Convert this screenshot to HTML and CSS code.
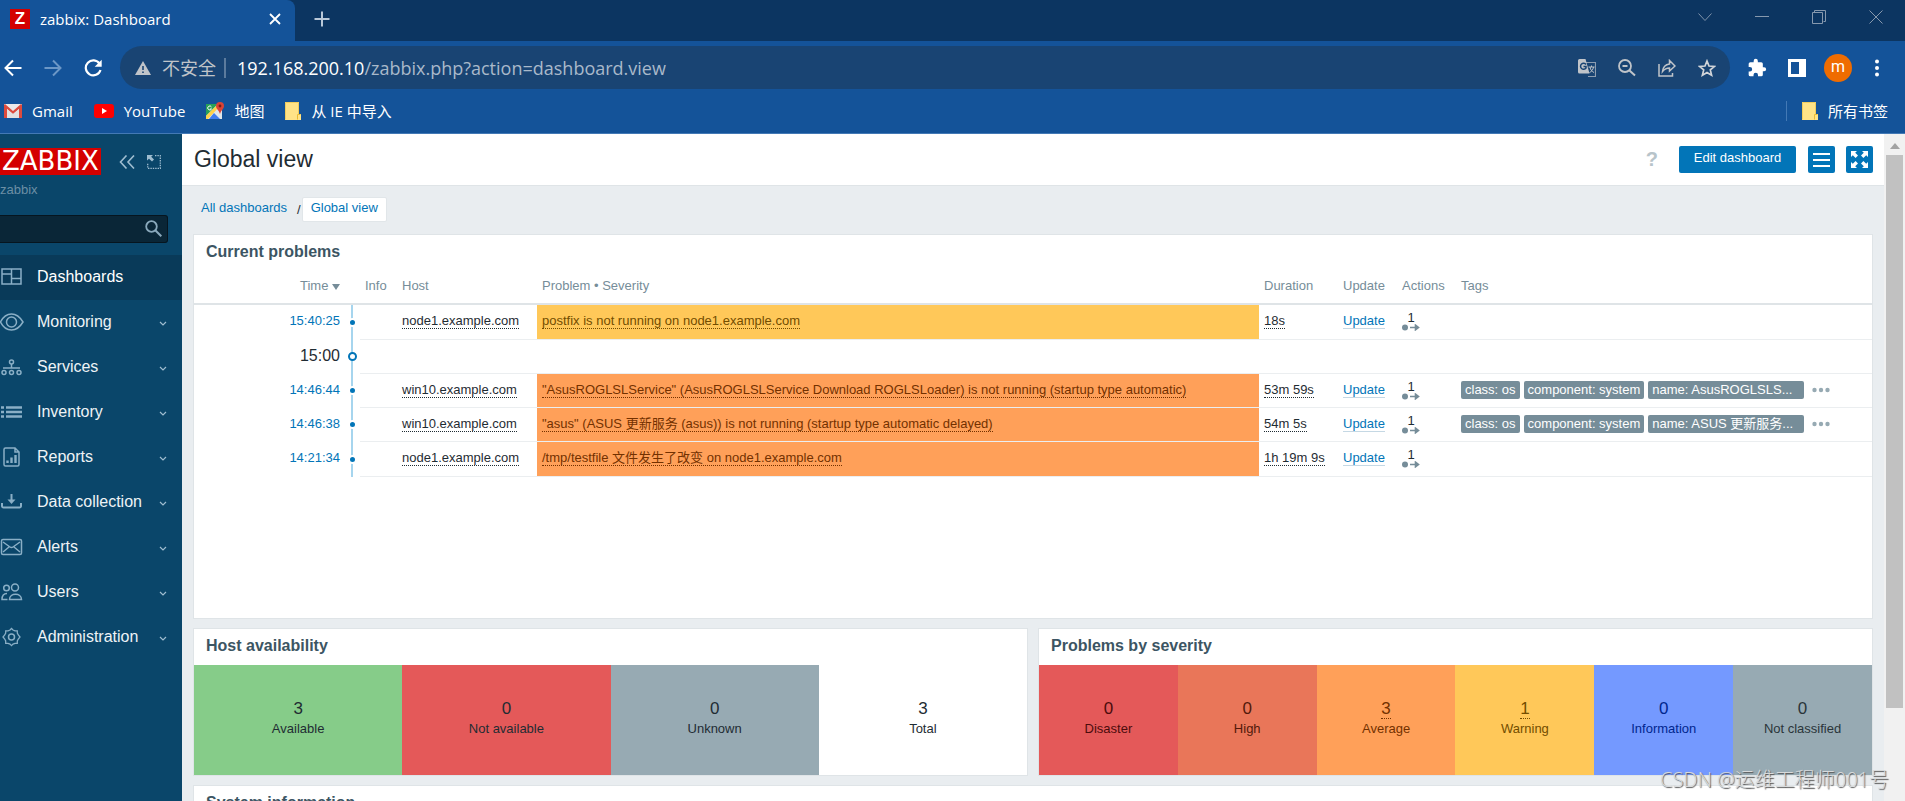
FILE: index.html
```html
<!DOCTYPE html>
<html lang="en">
<head>
<meta charset="utf-8">
<title>zabbix: Dashboard</title>
<link rel="stylesheet" href="styles.css">
</head>
<body>
<svg class="defs" aria-hidden="true">
  <symbol id="chev" viewBox="0 0 8 6"><path d="M1 1l3 3 3-3" fill="none" stroke="currentColor" stroke-width="1.2"/></symbol>
  <symbol id="folder" viewBox="0 0 16 18"><path d="M0 0h14v12h2v6H0z" fill="#ffe387"/><path d="M15.500 12.500h-3v5" fill="none" stroke="#e8bb35"/><path d="M.5 17.500V.5h13V12" fill="none" stroke="#f1cd5d"/></symbol>
  <symbol id="act" viewBox="0 0 18 7"><circle cx="3" cy="3.500" r="3" fill="#768d99"/><path d="M8 3.500h7M13.500 1.200l3 2.300-3 2.300z" fill="#768d99" stroke="#768d99" stroke-width="1.600"/></symbol>
  <symbol id="dots" viewBox="0 0 18 6"><g fill="#97aab3"><circle cx="2.500" cy="3" r="2.200"/><circle cx="9" cy="3" r="2.200"/><circle cx="15.500" cy="3" r="2.200"/></g></symbol>
</svg>

<header class="browser">
  <div class="tabstrip">
    <div class="tab">
      <span class="favicon">Z</span>
      <span class="tab-title">zabbix: Dashboard</span>
      <button class="icon-btn tab-close" aria-label="Close tab"><svg width="12" height="12" viewBox="0 0 12 12"><path d="M1 1l10 10M11 1L1 11" stroke="#fff" stroke-width="1.800"/></svg></button>
    </div>
    <button class="icon-btn new-tab" aria-label="New tab"><svg width="16" height="16" viewBox="0 0 16 16"><path d="M8 .5v15M.5 8h15" stroke="#b9c8d8" stroke-width="2"/></svg></button>
    <div class="win-controls">
      <button class="icon-btn" aria-label="Search tabs"><svg width="14" height="14" viewBox="0 0 14 14"><path d="M.5 3.500l6.500 7 6.500-7" fill="none" stroke="#7f93aa"/></svg></button>
      <button class="icon-btn" aria-label="Minimize"><svg width="14" height="14" viewBox="0 0 14 14"><path d="M0 6.500h14" stroke="#8799ae"/></svg></button>
      <button class="icon-btn" aria-label="Restore"><svg width="14" height="14" viewBox="0 0 14 14"><path d="M.5 2.500h10v11H.5zM2.500 2.500v-2h11v11h-2" fill="none" stroke="#8799ae"/></svg></button>
      <button class="icon-btn" aria-label="Close"><svg width="14" height="14" viewBox="0 0 14 14"><path d="M.5.5l13 13M13.500.5l-13 13" stroke="#8799ae"/></svg></button>
    </div>
  </div>

  <div class="toolbar">
    <div class="nav-btns">
      <button class="icon-btn" aria-label="Back"><svg width="18" height="18" viewBox="0 0 18 18"><path d="M17.500 9H2M9 1.500L1.500 9 9 16.500" fill="none" stroke="#fff" stroke-width="2"/></svg></button>
      <button class="icon-btn" aria-label="Forward"><svg width="18" height="18" viewBox="0 0 18 18"><path d="M.5 9H16M9 1.500L16.500 9 9 16.500" fill="none" stroke="#6c97c6" stroke-width="2"/></svg></button>
      <button class="icon-btn" aria-label="Reload"><svg width="18" height="18" viewBox="0 0 18 18"><path d="M15.600 4.800A7.500 7.500 0 1 0 16.500 11" fill="none" stroke="#fff" stroke-width="2.200"/><path d="M17.700.8v7h-7z" fill="#fff"/></svg></button>
    </div>
    <div class="omnibox">
      <svg width="16" height="14" viewBox="0 0 16 14"><path d="M8 0l8 14H0z" fill="#c0c4c9"/><path d="M8 5v4M8 10.500v1.500" stroke="#194473" stroke-width="1.600"/></svg>
      <span class="insecure">不安全</span>
      <span class="sep"></span>
      <span class="url"><b>192.168.200.10</b>/zabbix.php?action=dashboard.view</span>
      <div class="omni-icons">
        <button class="icon-btn" aria-label="Translate"><svg width="18" height="18" viewBox="0 0 18 18"><path d="M8 3.500h9.500v14H10" fill="none" stroke="#8d9db0" stroke-width="1.200"/><path d="M10.500 8h6M13.500 6.500V8M12 8c.5 3 2 4.500 4 5.500M15.500 8c-.5 3-2 4.500-4 5.500" fill="none" stroke="#c0c4c9"/><path d="M1.500 0h6l4 14.500h-10A1.500 1.500 0 0 1 0 13V1.500A1.500 1.500 0 0 1 1.500 0z" fill="#c0c4c9"/><path d="M8 5.500A3 3 0 1 0 8 9V7.500H5.500" fill="none" stroke="#194473" stroke-width="1.500"/></svg></button>
        <button class="icon-btn" aria-label="Zoom"><svg width="18" height="18" viewBox="0 0 18 18"><circle cx="7" cy="7" r="6" fill="none" stroke="#c0c4c9" stroke-width="1.800"/><path d="M4.500 7h5M11.500 11.500l5.500 5" stroke="#c0c4c9" stroke-width="2"/></svg></button>
        <button class="icon-btn" aria-label="Share"><svg width="18" height="18" viewBox="0 0 18 18"><path d="M1 5v12h13.500v-3" fill="none" stroke="#c0c4c9" stroke-width="1.500"/><path d="M4.500 12.500c.5-4.500 3-7 7-7.500V1.500L17 7l-5.500 5V9c-3 0-5 1-7 3.500z" fill="none" stroke="#c0c4c9" stroke-width="1.500"/></svg></button>
        <button class="icon-btn" aria-label="Bookmark"><svg width="18" height="18" viewBox="0 0 18 18"><path d="M9 2l2 5 5.500.4-4.200 3.500 1.300 5.300L9 13.400l-4.600 2.800 1.300-5.300L1.500 7.400 7 7z" fill="none" stroke="#d2d5d9" stroke-width="1.700"/></svg></button>
      </div>
    </div>
    <div class="tool-icons">
      <button class="icon-btn" aria-label="Extensions"><svg width="20" height="20" viewBox="0 0 24 24"><path fill="#fff" d="M20.500 11H19V7a2 2 0 0 0-2-2h-4V3.500a2.500 2.500 0 0 0-5 0V5H4a2 2 0 0 0-2 2v3.800h1.500a2.700 2.700 0 0 1 0 5.400H2V20a2 2 0 0 0 2 2h3.800v-1.500a2.700 2.700 0 0 1 5.400 0V22H17a2 2 0 0 0 2-2v-4h1.500a2.500 2.500 0 0 0 0-5z"/></svg></button>
      <button class="icon-btn" aria-label="Side panel"><svg width="18" height="18" viewBox="0 0 18 18"><path fill="#fff" fill-rule="evenodd" d="M0 0h18v18H0zM3 3v12h8V3z"/></svg></button>
      <button class="avatar" aria-label="Profile">m</button>
      <button class="icon-btn" aria-label="Menu"><svg width="6" height="18" viewBox="0 0 6 18"><g fill="#fff"><circle cx="3" cy="2.500" r="2"/><circle cx="3" cy="9" r="2"/><circle cx="3" cy="15.500" r="2"/></g></svg></button>
    </div>
  </div>

  <nav class="bookmarks" aria-label="Bookmarks">
    <a href="#"><svg width="18" height="14" viewBox="0 0 18 14"><rect width="18" height="14" rx="1" fill="#eceaea"/><path d="M0 14V1l1-1 8 7 8-7 1 1v13h-3V5L9 10 3 5v9z" fill="#dd4b3e"/><path d="M3 5l6 5 6-5v9H3z" fill="#e3e1e1"/></svg>Gmail</a>
    <a href="#"><svg width="20" height="14" viewBox="0 0 20 14"><rect width="20" height="14" rx="3" fill="#f00"/><path d="M8 4l5 3-5 3z" fill="#fff"/></svg>YouTube</a>
    <a href="#"><svg width="18" height="18" viewBox="0 0 18 18"><path d="M0 2h16v15H0z" fill="#dfe6ea"/><path d="M0 2h12L0 14z" fill="#29a058"/><path d="M0 14L12 2l2 2L2 17H0z" fill="#ffd24b"/><path d="M3 17l5-6 6 6z" fill="#3f7df0"/><path d="M5.500 5A2 2 0 1 0 5.500 7H4" fill="none" stroke="#fff"/><path d="M14 0a4 4 0 0 1 4 4c0 3-3 4-4 8-1-4-4-5-4-8a4 4 0 0 1 4-4z" fill="#db4437"/><circle cx="14" cy="4" r="1.400" fill="#7b1d15"/></svg>地图</a>
    <a href="#"><svg width="16" height="18"><use href="#folder"/></svg>从 IE 中导入</a>
    <a href="#" class="all-marks"><svg width="16" height="18"><use href="#folder"/></svg>所有书签</a>
  </nav>
</header>

<div class="app">
  <aside class="sidebar">
    <div class="brand">
      <a href="#" class="logo">ZABBIX</a>
      <button class="icon-btn" aria-label="Collapse sidebar"><svg width="16" height="14" viewBox="0 0 16 14"><path d="M7.500.5L1.500 7l6 6.500M15 .5L9 7l6 6.500" fill="none" stroke="#9fbdd0" stroke-width="1.600"/></svg></button>
      <button class="icon-btn" aria-label="Hide sidebar"><svg width="14" height="14" viewBox="0 0 14 14"><path d="M8 .7h5.300v12.600H.7V8" fill="none" stroke="#9fbdd0" stroke-width="1.300" stroke-dasharray="1.400 1"/><path d="M0 0h6L4.200 1.800 7 4.600 5 6.500 2 3.800 0 5.500z" fill="#9fbdd0"/></svg></button>
    </div>
    <div class="server">zabbix</div>
    <form class="search">
      <input type="text" aria-label="Search">
      <button class="icon-btn" type="button" aria-label="Search"><svg width="17" height="17" viewBox="0 0 17 17"><circle cx="6.500" cy="6.500" r="5.300" fill="none" stroke="#8aa9bc" stroke-width="1.800"/><path d="M10.300 10.300l6 6" stroke="#8aa9bc" stroke-width="2"/></svg></button>
    </form>
    <nav class="menu" aria-label="Main">
      <a href="#" class="active"><svg class="mi" viewBox="0 0 24 20"><path d="M2 2h19v15H2zM11.500 2v15M2 7h9.500M11.500 11.500H21"/></svg>Dashboards</a>
      <a href="#"><svg class="mi" viewBox="0 0 24 20"><path d="M.5 10C3 5 7 2 11.500 2S20 5 23 10c-3 5-7 8-11.500 8S3 15 .5 10z"/><circle cx="11.500" cy="10" r="5"/></svg>Monitoring<svg class="chev"><use href="#chev"/></svg></a>
      <a href="#"><svg class="mi" viewBox="0 0 24 20"><circle cx="11.500" cy="5" r="2"/><circle cx="4" cy="15.500" r="2"/><circle cx="11.500" cy="15.500" r="2"/><circle cx="19" cy="15.500" r="2"/><path d="M11.500 7v4M3 11h17"/></svg>Services<svg class="chev"><use href="#chev"/></svg></a>
      <a href="#"><svg class="mi thick" viewBox="0 0 24 20"><path d="M1 5.500h3M6 5.500h16M1 10h3M6 10h16M1 14.500h3M6 14.500h16"/></svg>Inventory<svg class="chev"><use href="#chev"/></svg></a>
      <a href="#"><svg class="mi" viewBox="0 0 24 20"><path d="M5.500 1H15l4 4v12.500a1.500 1.500 0 0 1-1.500 1.500h-12A1.500 1.500 0 0 1 4 17.500v-15A1.500 1.500 0 0 1 5.500 1zM15 1v4h4"/><path d="M7.500 13.500V16M11.500 10.500V16M15.500 8V16" stroke-width="2.400"/></svg>Reports<svg class="chev"><use href="#chev"/></svg></a>
      <a href="#"><svg class="mi" viewBox="0 0 24 20"><path d="M11.500 2v8" stroke-width="2"/><path d="M7.500 7.500h8l-4 4.500z" fill="#8aafc6" stroke="none"/><path d="M2 11v3a1.500 1.500 0 0 0 1.500 1.500h16A1.500 1.500 0 0 0 21 14v-3" stroke-width="2"/></svg>Data collection<svg class="chev"><use href="#chev"/></svg></a>
      <a href="#"><svg class="mi" viewBox="0 0 24 20"><rect x="1.500" y="2.500" width="20" height="15" rx="1.500"/><path d="M3 5l7 5c1 .7 2 .7 3 0l7-5M3 15l6-5M20 15l-6-5"/></svg>Alerts<svg class="chev"><use href="#chev"/></svg></a>
      <a href="#"><svg class="mi" viewBox="0 0 24 20"><circle cx="6.500" cy="6" r="2.800"/><circle cx="15" cy="5.500" r="3.500"/><path d="M9.500 17.500c0-7 12-7 12 0zM7.500 17.500H2c0-4 2-6 5-6"/></svg>Users<svg class="chev"><use href="#chev"/></svg></a>
      <a href="#"><svg class="mi" viewBox="0 0 24 20"><circle cx="11.500" cy="10" r="3"/><path d="M10 3l1.500-1.500L13 3l2 .8h2.300V6l1 2 1.700 2-1.700 2-1 2v2.300H15l-2 .8-1.500 1.500L10 17.100l-2-.8H5.700V14l-1-2L3 10l1.700-2 1-2V3.800H8z" stroke-width="1.300"/></svg>Administration<svg class="chev"><use href="#chev"/></svg></a>
    </nav>
  </aside>

  <main class="main">
    <header class="page-head">
      <h1>Global view</h1>
      <a href="#" class="help" aria-label="Help">?</a>
      <button class="btn edit">Edit dashboard</button>
      <button class="btn square" aria-label="Actions"><svg width="17" height="14" viewBox="0 0 17 14"><path d="M0 1h17M0 7h17M0 13h17" stroke="#fff" stroke-width="2"/></svg></button>
      <button class="btn square" aria-label="Kiosk mode"><svg width="17" height="17" viewBox="0 0 17 17"><g fill="#fff"><path d="M0 0h6L4.200 1.800 7 4.600 4.600 7 1.800 4.200 0 6z"/><path d="M17 0h-6l1.800 1.800L10 4.600 12.400 7l2.800-2.800L17 6z"/><path d="M0 17h6l-1.800-1.800L7 12.400 4.600 10l-2.800 2.800L0 11z"/><path d="M17 17h-6l1.800-1.800-2.800-2.800 2.400-2.400 2.800 2.800L17 11z"/></g></svg></button>
    </header>

    <nav class="crumbs" aria-label="Breadcrumb">
      <a href="#">All dashboards</a><span>/</span><a href="#" class="current">Global view</a>
    </nav>

    <div class="grid">
      <section class="widget problems">
        <h2>Current problems</h2>
        <table>
          <colgroup><col class="c-time"><col class="c-line"><col class="c-info"><col class="c-host"><col><col class="c-dur"><col class="c-upd"><col class="c-act"><col class="c-tags"></colgroup>
          <thead>
            <tr><th class="time">Time <span class="sort"></span></th><th></th><th>Info</th><th>Host</th><th>Problem • Severity</th><th>Duration</th><th>Update</th><th>Actions</th><th>Tags</th></tr>
          </thead>
          <tbody>
            <tr><td class="time"><a href="#">15:40:25</a></td><td class="line"><i class="dot"></i></td><td></td><td><a href="#" class="dotted">node1.example.com</a></td><td class="warning"><a href="#" class="dotted">postfix is not running on node1.example.com</a></td><td><span class="dotted">18s</span></td><td><a href="#" class="upd">Update</a></td><td><span class="act">1<svg><use href="#act"/></svg></span></td><td></td></tr>
            <tr class="hour"><td class="time">15:00</td><td class="line"><i class="ring"></i></td><td colspan="7"></td></tr>
            <tr class="tagged"><td class="time"><a href="#">14:46:44</a></td><td class="line"><i class="dot"></i></td><td></td><td><a href="#" class="dotted">win10.example.com</a></td><td class="average"><a href="#" class="dotted">"AsusROGLSLService" (AsusROGLSLService Download ROGLSLoader) is not running (startup type automatic)</a></td><td><span class="dotted">53m 59s</span></td><td><a href="#" class="upd">Update</a></td><td><span class="act">1<svg><use href="#act"/></svg></span></td><td><div class="tags"><span>class: os</span><span>component: system</span><span class="wide">name: AsusROGLSLS...</span><svg><use href="#dots"/></svg></div></td></tr>
            <tr class="tagged"><td class="time"><a href="#">14:46:38</a></td><td class="line"><i class="dot"></i></td><td></td><td><a href="#" class="dotted">win10.example.com</a></td><td class="average"><a href="#" class="dotted">"asus" (ASUS 更新服务 (asus)) is not running (startup type automatic delayed)</a></td><td><span class="dotted">54m 5s</span></td><td><a href="#" class="upd">Update</a></td><td><span class="act">1<svg><use href="#act"/></svg></span></td><td><div class="tags"><span>class: os</span><span>component: system</span><span class="wide">name: ASUS 更新服务...</span><svg><use href="#dots"/></svg></div></td></tr>
            <tr><td class="time"><a href="#">14:21:34</a></td><td class="line"><i class="dot"></i></td><td></td><td><a href="#" class="dotted">node1.example.com</a></td><td class="average"><a href="#" class="dotted">/tmp/testfile 文件发生了改变 on node1.example.com</a></td><td><span class="dotted">1h 19m 9s</span></td><td><a href="#" class="upd">Update</a></td><td><span class="act">1<svg><use href="#act"/></svg></span></td><td></td></tr>
          </tbody>
        </table>
      </section>

      <section class="widget">
        <h2>Host availability</h2>
        <div class="cells">
          <div class="ok"><b>3</b>Available</div>
          <div class="down"><b>0</b>Not available</div>
          <div class="unknown"><b>0</b>Unknown</div>
          <div><b>3</b>Total</div>
        </div>
      </section>

      <section class="widget">
        <h2>Problems by severity</h2>
        <div class="cells">
          <div class="disaster"><b>0</b>Disaster</div>
          <div class="high"><b>0</b>High</div>
          <div class="average"><b class="linked">3</b>Average</div>
          <div class="warning"><b class="linked">1</b>Warning</div>
          <div class="information"><b>0</b>Information</div>
          <div class="nc"><b>0</b>Not classified</div>
        </div>
      </section>

      <section class="widget system">
        <h2>System information</h2>
      </section>
    </div>
  </main>

  <div class="scrollbar">
    <svg width="10" height="6" viewBox="0 0 10 6"><path d="M5 0l5 6H0z" fill="#a3a3a3"/></svg>
    <div class="thumb"></div>
  </div>
</div>
<div class="watermark">CSDN @运维工程师001号</div>
</body>
</html>
```

FILE: styles.css
```css
* { box-sizing: border-box; }

body {
  margin: 0;
  height: 100vh;
  display: flex;
  flex-direction: column;
  overflow: hidden;
  font: 13px/18px "Liberation Sans", "Noto Sans CJK SC", sans-serif;
  color: #1f2c33;
  background: #e9edf0;
}

a { color: #0275b8; text-decoration: none; }
svg { flex: none; display: block; }
button { font: inherit; cursor: pointer; }
.defs { display: none; }
.icon-btn { border: 0; padding: 0; background: none; display: flex; align-items: center; justify-content: center; }

/* Browser frame */
.browser {
  flex: none;
  color: #fff;
  background: #145399;
  border-bottom: 1px solid #4379b5;
  font-family: "Open Sans", "Noto Sans CJK SC", sans-serif;
}
.tabstrip { display: flex; height: 41px; background: #0c3561; }
.tab {
  display: flex;
  align-items: center;
  width: 295px;
  padding: 0 14px 4px 10px;
  background: #145399;
  border-radius: 0 8px 0 0;
}
.favicon {
  width: 20px;
  height: 20px;
  margin-right: 10px;
  background: #d40000;
  font: bold 17px/20px "Liberation Sans", sans-serif;
  text-align: center;
}
.tab-title { font-size: 15px; }
.tab-close { margin-left: auto; }
.new-tab { height: 38px; margin-left: 19px; }
.win-controls { display: flex; gap: 43px; margin-left: auto; padding-right: 22px; height: 34px; }

.toolbar { display: flex; align-items: center; height: 54px; padding-bottom: 1px; }
.nav-btns { display: flex; gap: 22px; width: 120px; padding-left: 4px; }
.omnibox {
  flex: 1;
  display: flex;
  align-items: center;
  height: 43px;
  padding: 0 14px 0 15px;
  border-radius: 22px;
  background: #194473;
  font-size: 18px;
}
.insecure { margin-left: 11px; color: #c0c4c9; }
.sep { width: 2px; height: 20px; margin: 0 11px 0 8px; background: #5c7b9d; }
.url { color: #a9b9ca; }
.url b { color: #fff; font-weight: 400; }
.omni-icons { display: flex; gap: 22px; margin-left: auto; }
.tool-icons { display: flex; align-items: center; gap: 18px; padding: 0 25px 0 17px; }
.tool-icons > :first-child { margin-right: 3px; }
.tool-icons > :last-child { margin-left: 4px; }
.avatar {
  width: 28px;
  height: 28px;
  border: 0;
  padding: 0 0 2px;
  border-radius: 50%;
  background: #ef6c00;
  color: #fff;
  font: 16px/20px Roboto, sans-serif;
}
.bookmarks { display: flex; align-items: center; height: 38px; padding: 0 17px 6px 4px; gap: 21px; }
.bookmarks a { display: flex; align-items: center; gap: 10px; color: #fff; font-size: 15px; line-height: 20px; }
.bookmarks .all-marks { margin-left: auto; padding-left: 15px; border-left: 1px solid #4379b5; }

/* Application */
.app { flex: 1; display: flex; min-height: 0; }
.sidebar { flex: none; width: 182px; background: #0a466a; }
.brand { display: flex; align-items: center; gap: 12px; padding: 14px 21px 0 0; }
.logo {
  width: 101px;
  padding-left: 2px;
  margin-right: 6px;
  background: #d40000;
  color: #fff;
  font: 26px/27px "DejaVu Sans", sans-serif;
}
.server { padding: 6px 0 0; color: #6c8fa5; }
.search {
  display: flex;
  width: 168px;
  height: 28px;
  margin: 16px 0 12px;
  padding: 0 5px 2px 0;
  background: #0a2637;
  border: 1px solid #06151f;
  border-left: 0;
  border-radius: 0 3px 3px 0;
}
.search input { flex: 1; min-width: 0; border: 0; outline: 0; background: none; color: #fff; }
.menu a {
  display: flex;
  align-items: center;
  height: 45px;
  padding: 0 15px 1px 0;
  color: #eef3f6;
  font-size: 16px;
}
.menu .active { background: #093a59; color: #fff; }
.mi { width: 24px; height: 20px; margin-right: 13px; fill: none; stroke: #8aafc6; stroke-width: 1.5; }
.mi.thick { stroke-width: 2.4; }
.chev { width: 8px; height: 6px; margin: 3px 0 0 auto; color: #9fbdd0; }

.main { flex: 1; min-width: 0; overflow: hidden; }
.page-head {
  display: flex;
  align-items: center;
  height: 52px;
  padding: 0 11px 0 12px;
  background: #fff;
  border-bottom: 1px solid #dfe4e7;
}
.page-head h1 { margin: 0 auto 0 0; padding-bottom: 2px; font-size: 23px; font-weight: 400; line-height: 28px; }
.help { margin-right: 21px; padding-bottom: 2px; color: #b8c4ca; font-size: 20px; font-weight: 700; }
.btn {
  display: flex;
  align-items: center;
  justify-content: center;
  height: 27px;
  padding: 0 13px;
  border: 0;
  border-radius: 2px;
  background: #0275b8;
  color: #fff;
}
.btn.edit { width: 117px; padding-bottom: 3px; margin-right: 1px; }
.btn.square { width: 27px; padding: 0; margin-left: 11px; }

.crumbs { display: flex; align-items: center; height: 48px; padding: 0 19px 1px; }
.crumbs a { line-height: 18px; padding-bottom: 3px; }
.crumbs span { margin: 0 1px 0 10px; }
.crumbs .current {
  padding: 1px 8px 4px;
  background: #fff;
  border: 1px solid #e1e6e9;
  border-radius: 2px;
}

.grid { display: grid; grid-template-columns: 1fr 1fr; gap: 9px 10px; padding: 0 11px; }
.widget { background: #fff; border: 1px solid #dfe4e7; min-width: 0; }
.widget h2 { margin: 0; padding: 8px 12px 10px; font-size: 16px; line-height: 18px; color: #3c5563; }
.problems { grid-column: 1 / -1; min-height: 385px; }
.system { grid-column: 1 / -1; min-height: 120px; }

table { width: 100%; table-layout: fixed; border-collapse: separate; border-spacing: 0; }
.c-time { width: 151px; }
.c-line { width: 15px; }
.c-info { width: 37px; }
.c-host { width: 140px; }
.c-dur { width: 79px; }
.c-upd, .c-act { width: 59px; }
.c-tags { width: 416px; }
th, td { padding: 0 5px; text-align: left; white-space: nowrap; }
th {
  height: 34px;
  padding-bottom: 3px;
  font-weight: 400;
  color: #768d99;
  border-bottom: 2px solid #dfe4e7;
}
td { height: 35px; padding-bottom: 2px; border-bottom: 1px solid #ebeef0; }
.hour td, .tagged td { height: 34px; }
.time { text-align: right; }
td.time, td.line { border-bottom-color: transparent; }
td.line { padding: 0 0 0 3px; background: linear-gradient(#a6d5ee, #a6d5ee) 6px 0 / 2px 100% no-repeat; background-origin: border-box; background-clip: border-box; }
.hour .time { font-size: 16px; }
.sort { display: inline-block; border: 4px solid transparent; border-top: 6px solid #768d99; border-bottom: 0; }
.dot, .ring { display: block; width: 9px; height: 9px; border-radius: 50%; background: #0275b8; border: 2px solid #fff; }
.ring { background: #fff; border-color: #0275b8; }
.dotted { color: inherit; border-bottom: 1px dotted; }
.upd { border-bottom: 1px solid #c5d8e4; }
.act { display: inline-flex; flex-direction: column; align-items: center; line-height: 13px; vertical-align: middle; }
.act svg { width: 18px; height: 7px; }
.tags { display: flex; align-items: center; gap: 4px; }
.tags span { padding: 0 4px; border-radius: 2px; background: #768d99; color: #fff; }
.tags .wide { min-width: 156px; }
.tags svg { width: 18px; height: 6px; margin-left: 4px; }

.cells { display: flex; height: 110px; }
.cells div {
  flex: 1;
  display: flex;
  flex-direction: column;
  align-items: center;
  justify-content: center;
  padding-bottom: 2px;
}
.cells b { margin-bottom: 1px; font-size: 17px; font-weight: 400; line-height: 18px; border-bottom: 1px dotted transparent; }
.cells .linked { border-bottom-color: currentColor; }
.ok { background: #86cc89; }
.down { background: #e45959; }
.unknown { background: #97aab3; }
.disaster { background: #e45959; color: #4b0c0c; }
.high { background: #e97659; color: #52190b; }
.average { background: #ffa059; color: #733100; }
.warning { background: #ffc859; color: #734d00; }
.information { background: #7499ff; color: #00268e; }
.nc { background: #97aab3; color: #2a353a; }

.scrollbar {
  flex: none;
  display: flex;
  flex-direction: column;
  align-items: center;
  width: 21px;
  padding-top: 9px;
  background: #f1f1f1;
}
.thumb { width: 17px; height: 84%; margin-top: 6px; background: #c1c1c1; }

.watermark {
  position: absolute;
  right: 16px;
  bottom: 8px;
  font: 300 20px/26px "Open Sans", "Noto Sans CJK SC", sans-serif;
  color: #d8dadb;
  text-shadow: 1px 1px 1px #555;
}
```
